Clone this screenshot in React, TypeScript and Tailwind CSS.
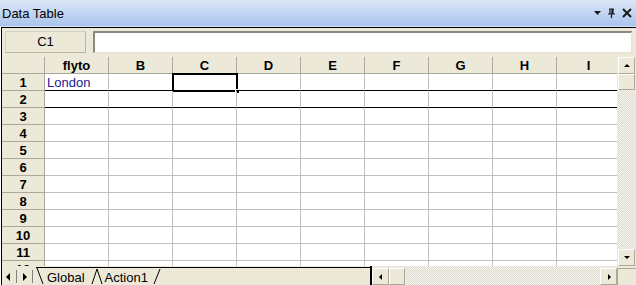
import React from "react";

const cols = ["flyto", "B", "C", "D", "E", "F", "G", "H", "I"];
const rows = [1, 2, 3, 4, 5, 6, 7, 8, 9, 10, 11, 12];

const dither =
  "bg-[repeating-conic-gradient(#f4f3ee_0_25%,#dedbd0_0_50%)] bg-[length:2px_2px]";

function ArrowBtn({ dir, className = "" }: { dir: "up" | "down" | "left" | "right"; className?: string }) {
  const paths: Record<string, string> = {
    up: "M1 5 L4 2 L7 5 Z",
    down: "M1 2 L4 5 L7 2 Z",
    left: "M5 1 L2 4 L5 7 Z",
    right: "M3 1 L6 4 L3 7 Z",
  };
  return (
    <div
      className={`flex items-center justify-center bg-[#ece9d8] border border-t-white border-l-white border-r-[#aca899] border-b-[#aca899] ${className}`}
    >
      <svg width="8" height="8" viewBox="0 0 8 8">
        <path d={paths[dir]} fill="#000" />
      </svg>
    </div>
  );
}

export default function App() {
  return (
    <div className="w-[636px] h-[285px] overflow-hidden bg-white font-['Liberation_Sans',Arial,sans-serif] text-black select-none">
      {/* Title bar */}
      <div className="h-[27px] flex items-center justify-between px-[2px] bg-gradient-to-b from-[#dce8f9] to-[#aac4ec] border-b border-[#d6e3f6]">
        <span className="text-[13px] leading-none">Data Table</span>
        <div className="flex items-center gap-[6px] pr-[2px]">
          <svg width="7" height="5" viewBox="0 0 7 5">
            <path d="M0 0 H7 L3.5 4 Z" fill="#1a1a1a" />
          </svg>
          <svg width="9" height="10" viewBox="0 0 9 10">
            <path d="M2 1 H7 M3 1 V6 M6 1 V6 M5 1 V6 M1 6 H8 M4.5 6 V10" stroke="#1a1a1a" strokeWidth="1.2" fill="none" />
          </svg>
          <svg width="10" height="10" viewBox="0 0 10 10">
            <path d="M1 1 L9 9 M9 1 L1 9" stroke="#1a1a1a" strokeWidth="2" />
          </svg>
        </div>
      </div>

      {/* Frame */}
      <div className="ml-px h-[258px] flex flex-col bg-[#ece9d8] border-t border-l border-black">
        {/* Name box + formula bar */}
        <div className="flex items-center gap-[7px] pl-[3px] pt-[3px] pb-[4px] pr-[4px]">
          <div className="w-[81px] h-[22px] flex items-center justify-center text-[13px] bg-[#ece9d8] border border-[#d4d0c8] border-b-[#b8b4a4] border-r-[#b8b4a4]">
            C1
          </div>
          <div className="flex-1 h-[22px] bg-white border-t-2 border-l-2 border-t-[#8c8a80] border-l-[#8c8a80] border-r border-b border-r-[#e4e2d8] border-b-[#e4e2d8]" />
        </div>

        {/* Grid + vertical scrollbar */}
        <div className="flex h-[209px]">
          <div className="w-[615px] overflow-hidden bg-white">
            <div className="flex h-[17px]">
              <div className="w-[43px] shrink-0 bg-[#ece9d8] border-r border-b border-[#aca899]" />
              {cols.map((c) => (
                <div
                  key={c}
                  className="w-[64px] shrink-0 flex items-center justify-center bg-[#ece9d8] border-r border-b border-[#aca899] text-[13px] font-bold leading-none"
                >
                  {c}
                </div>
              ))}
            </div>
            {rows.map((r) => (
              <div key={r} className="flex h-[17px]">
                <div className="w-[43px] shrink-0 flex items-center justify-center bg-[#ece9d8] border-r border-b border-[#aca899] text-[13px] font-bold leading-none">
                  {r}
                </div>
                {cols.map((c, i) => (
                  <div
                    key={c}
                    className={`relative w-[64px] shrink-0 flex items-center px-[2px] border-r border-b border-r-[#c0c0c0] text-[13px] leading-none ${
                      r <= 2 ? "border-b-black" : "border-b-[#c0c0c0]"
                    }`}
                  >
                    {r === 1 && i === 0 && <span className="text-[#1a1a96]">London</span>}
                    {r === 1 && i === 2 && (
                      <>
                        <div className="absolute -left-px -top-px right-[-2px] bottom-[-2px] border-2 border-black" />
                        <div className="absolute right-[-4px] bottom-[-4px] w-[5px] h-[5px] bg-black border border-white" />
                      </>
                    )}
                  </div>
                ))}
              </div>
            ))}
          </div>

          {/* Vertical scrollbar */}
          <div className={`w-[17px] ml-px flex flex-col ${dither}`}>
            <ArrowBtn dir="up" className="h-[17px]" />
            <div className="h-[16px] bg-[#ece9d8] border border-t-white border-l-white border-r-[#aca899] border-b-[#aca899]" />
            <div className="flex-1" />
            <ArrowBtn dir="down" className="h-[17px]" />
          </div>
        </div>

        {/* Sheet tabs + horizontal scrollbar */}
        <div className="flex h-[19px] overflow-hidden">
          <div className="w-[368px] flex items-stretch">
            <div className="flex items-center gap-[5px] pl-[4px] pr-[3px] pt-[2px]">
              <svg width="5" height="8" viewBox="0 0 5 8">
                <path d="M4 0 L0 4 L4 8 Z" fill="#000" />
              </svg>
              <div className="w-px h-[13px] bg-[#808080]" />
              <svg width="5" height="8" viewBox="0 0 5 8">
                <path d="M1 0 L5 4 L1 8 Z" fill="#000" />
              </svg>
              <div className="w-px h-[13px] bg-[#808080]" />
            </div>
            <div className="flex-1 flex items-stretch border-t border-black mt-[1px]">
              <svg width="8" height="17" viewBox="0 0 8 17">
                <path d="M1 0 L7 16" stroke="#000" strokeWidth="1" fill="none" />
              </svg>
              <span className="text-[13px] leading-none pt-[3px] pl-[3px] pr-[6px]">Global</span>
              <svg width="12" height="17" viewBox="0 0 12 17">
                <path d="M1 16 L6 1 L11 16" stroke="#000" strokeWidth="1" fill="none" />
              </svg>
              <span className="text-[13px] leading-none pt-[3px] pl-[2px] pr-[5px]">Action1</span>
              <svg width="8" height="17" viewBox="0 0 8 17">
                <path d="M1 16 L7 1" stroke="#000" strokeWidth="1" fill="none" />
              </svg>
            </div>
          </div>
          <div className="w-[2px] bg-black" />
          <div className={`w-[245px] flex items-stretch pt-[2px] ${dither}`}>
            <ArrowBtn dir="left" className="w-[17px]" />
            <div className="w-[16px] bg-[#ece9d8] border border-t-white border-l-white border-r-[#aca899] border-b-[#aca899]" />
            <div className="flex-1" />
            <ArrowBtn dir="right" className="w-[17px]" />
          </div>
          <div className="flex-1 bg-[#ece9d8] border-t border-l border-[#aca899] mt-[2px]" />
        </div>
      </div>
    </div>
  );
}
